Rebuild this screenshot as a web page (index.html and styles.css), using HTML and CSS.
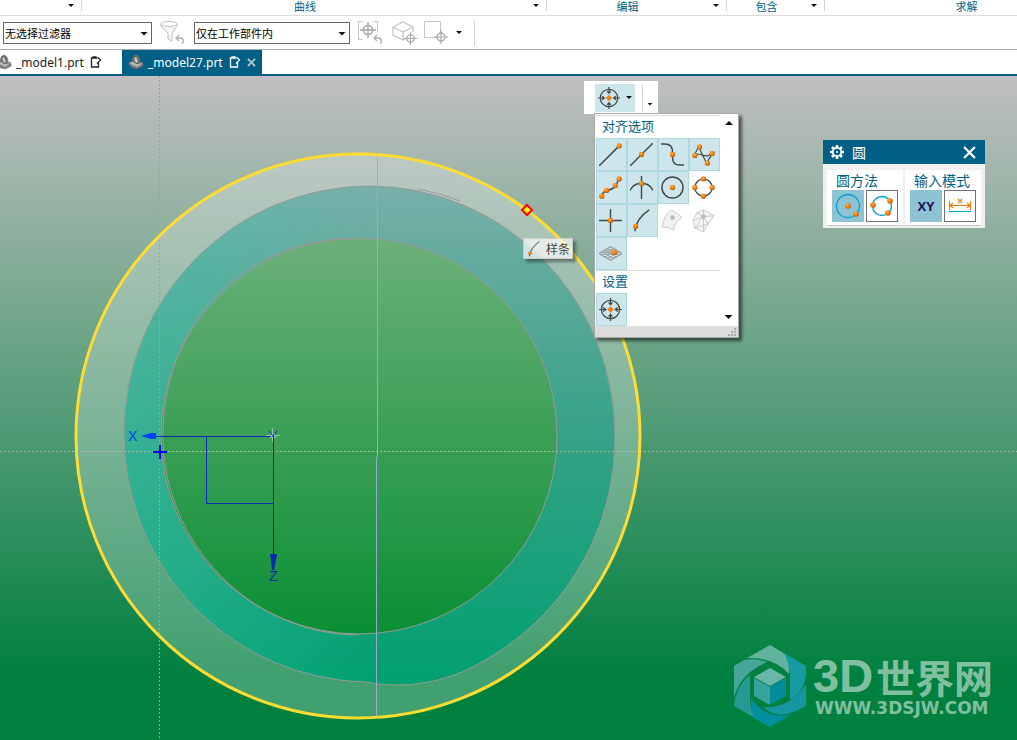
FILE: index.html
```html
<!DOCTYPE html>
<html lang="zh-CN">
<head>
<meta charset="utf-8">
<title>_model27.prt</title>
<link rel="stylesheet" href="styles.css">
</head>
<body>
<svg class="defs" aria-hidden="true">
  <defs>
    <radialGradient id="orange" cx=".4" cy=".35" r=".7"><stop offset="0" stop-color="#ffb347"/><stop offset=".5" stop-color="#f08010"/><stop offset="1" stop-color="#b85000"/></radialGradient>
    <symbol id="ball" viewBox="0 0 6 6"><circle cx="3" cy="3" r="2.8" fill="url(#orange)"/></symbol>
    <symbol id="snap" viewBox="0 0 24 24">
      <g fill="none" stroke="#404848" stroke-width="1.3"><circle cx="12" cy="12" r="9.5"/><path d="M12 0v7M12 24v-7M0 12h7M24 12h-7M10 4.500 12 7l2-2.500M10 19.500 12 17l2 2.500M4.500 10 7 12l-2.500 2M19.500 10 17 12l2.500 2"/></g>
      <path d="M12 8.500 15.500 12 12 15.500 8.500 12z" fill="#f08010"/>
    </symbol>
    <symbol id="spline" viewBox="0 0 24 24"><path d="M20 1C11 7 6 15 5 23" fill="none" stroke="#404848" stroke-width="1.500"/><use href="#ball" x="3" y="15" width="6" height="6"/></symbol>
    <symbol id="part" viewBox="0 0 16 16"><path d="M1 9 4 7Q5 1 8 1q4 1 4 7l3 1v3l-6 3-4-1-4-3z" fill="#7c7c7c" stroke="#666" stroke-width=".6"/><path d="M1 9l4-1 5 2 5-1-6 4z" fill="#b8b8b8"/><ellipse cx="8" cy="6" rx="2" ry="3.500" transform="rotate(-20 8 6)" fill="#c8c8c8" stroke="#555"/></symbol>
    <symbol id="note" viewBox="0 0 12 12"><path d="M7.500 2H1.500v9h7V7M3 2V1h3v1M8 1.500 10.500 4 7 7.500" fill="none" stroke="currentColor" stroke-width="1.300"/></symbol>
    <symbol id="undo" viewBox="0 0 10 10"><path d="M4 1 1 4l3 3M1 4h4c4 0 4 4 2 6" fill="none" stroke="#b0b0b0" stroke-width="1.300"/></symbol>
    <symbol id="target" viewBox="0 0 14 14"><path d="M7 0v14M0 7h14" stroke="#a8a8a8" stroke-width="1.200"/><circle cx="7" cy="7" r="4" fill="none" stroke="#a8a8a8" stroke-width="1.400"/></symbol>
  </defs>
</svg>

<header class="ribbon">
  <section class="group group-first"><button class="caret" aria-label="更多"></button></section>
  <section class="group group-curve"><span class="group-name">曲线</span><button class="caret" aria-label="曲线"></button></section>
  <section class="group group-edit"><span class="group-name">编辑</span><button class="caret" aria-label="编辑"></button></section>
  <section class="group group-include"><span class="group-name">包含</span><button class="caret" aria-label="包含"></button></section>
  <section class="group group-solve"><span class="group-name">求解</span></section>
</header>

<div class="selection-bar">
  <div class="pick pick-filter"><select aria-label="选择过滤器"><option>无选择过滤器</option></select></div>
  <button class="tool" aria-label="重置过滤器"><svg viewBox="0 0 26 26"><path d="M1 4v2l7 7v6l4 2v-8l5-7V4" fill="#f7f7f7" stroke="#c0c0c0"/><ellipse cx="9" cy="4" rx="8" ry="2.500" fill="#fff" stroke="#c0c0c0"/><use href="#undo" x="15" y="14" width="10" height="10"/></svg></button>
  <div class="pick pick-scope"><select aria-label="选择范围"><option>仅在工作部件内</option></select></div>
  <button class="tool" aria-label="重置选择"><svg viewBox="0 0 26 26"><path d="M4.500 1.500h-4v18h4M16 1.500h3.500v11" fill="none" stroke="#c6c6c6"/><use href="#target" x="2" y="2" width="16" height="16"/><use href="#undo" x="15" y="14" width="10" height="10"/></svg></button>
  <button class="tool tool-wide" aria-label="实体选择"><svg viewBox="0 0 26 26"><path d="M1 7 11 2l10 5v5M1 7v8l10 5 2-1M1 7l10 5 10-5M11 12v8" fill="none" stroke="#c4c4c4" stroke-width="1.300"/><use href="#target" x="12" y="12" width="13" height="13"/></svg></button>
  <button class="tool" aria-label="矩形选择"><svg viewBox="0 0 26 26"><path d="M12 17.500H.5v-16h16v10" fill="none" stroke="#c6c6c6"/><use href="#target" x="10" y="10" width="14" height="14"/></svg></button>
  <button class="caret caret-tool" aria-label="更多选择"></button>
  <span class="bar-line"></span>
</div>

<nav class="tabs">
  <a class="tab" href="#model1"><svg class="part"><use href="#part"/></svg>_model1.prt<svg class="note"><use href="#note"/></svg></a>
  <a class="tab tab-on" href="#model27"><svg class="part"><use href="#part"/></svg>_model27.prt<svg class="note"><use href="#note"/></svg><svg class="close" viewBox="0 0 10 10"><path d="m1 1 8 8M9 1 1 9" stroke="#b9c4c8" stroke-width="2"/></svg></a>
</nav>

<main class="stage">
  <svg class="model" role="img" aria-label="草图">
    <defs>
      <linearGradient id="core" x1="0" y1="0" x2="0" y2="1"><stop offset="0" stop-color="#6bb079"/><stop offset="1" stop-color="#0a8f34"/></linearGradient>
      <linearGradient id="ring" x1="0" y1="0" x2="0" y2="1"><stop offset="0" stop-color="#78afaa"/><stop offset=".5" stop-color="#35a286"/><stop offset="1" stop-color="#00a070"/></linearGradient>
      <linearGradient id="sheen"><stop offset="0" stop-color="#38c8a8" stop-opacity=".4"/><stop offset=".5" stop-color="#38c8a8" stop-opacity="0"/></linearGradient>
      <path id="band" d="M369 186A246 250 0 0 1 615 436C615 540 556 622 480 663C445 683 410 687 377 684C365 681 355 682 340 680C300 676 124 620 124 433A246 247 0 0 1 369 186Z"/>
    </defs>
    <g transform="translate(0 -76)">
      <circle cx="358" cy="436" r="282" fill="#fff" fill-opacity=".25"/>
      <path d="M369 186A246 250 0 0 1 615 436C615 540 556 622 480 663C445 683 410 687 377 684C365 681 355 682 340 680A246 248 0 0 1 124 433A246 247 0 0 1 369 186Z" fill="url(#ring)"/>
      <path d="M369 186A246 250 0 0 1 615 436C615 540 556 622 480 663C445 683 410 687 377 684C365 681 355 682 340 680A246 248 0 0 1 124 433A246 247 0 0 1 369 186Z" fill="url(#sheen)" stroke="#999"/>
      <circle cx="359" cy="436" r="198" fill="url(#core)" stroke="#999"/>
      <path d="M377 239C235 230 163 330 163 436C163 542 250 635 359 635" fill="none" stroke="#999"/>
      <path d="M418 189q22 4 42 12" fill="none" stroke="#999"/>
      <path d="M159.500 76V740" stroke="#80b878" stroke-dasharray="2 2"/>
      <path d="M0 451.500H4000" stroke="#b9b894" stroke-dasharray="2 2"/>
      <path d="M377.500 153V457" stroke="#9aabc9"/><path d="M376.500 457V718" stroke="#98aad0"/>
      <circle cx="358" cy="436" r="282" fill="none" stroke="#ffdc32" stroke-width="3"/>
      <g fill="none" stroke="#0028b4"><path d="M155 436.500H273.500M206.500 436V503.500H273M273.500 436V556"/></g>
      <path d="M141 436l10-3h5v6h-5z" fill="#0040ff"/>
      <path d="M270 554h7l-1 6-2 10h-2l-1-10z" fill="#0028b4"/>
      <g class="axis"><text x="128" y="441" fill="#0040f0">X</text><text x="269" y="581" fill="#0028b4">Z</text></g>
      <path d="M266 435.500h14M272.500 428v14" stroke="#dfeae0" stroke-opacity=".5"/>
      <path d="M270 433l6 5M275 433l-5 5" stroke="#e4eee4" stroke-opacity=".8"/>
      <path d="M269 431l4 5 4-5M273.500 436v5" fill="none" stroke="#0028b4"/>
      <path d="M153 452h14M160 445v14" stroke="#00f" stroke-width="2"/>
      <path d="M527 205l5 5-5 5-5-5z" fill="#ff0" stroke="#f00" stroke-width="2"/>
    </g>
  </svg>

  <div class="hint" role="tooltip"><svg><use href="#spline"/></svg>样条</div>

  <div class="snap-bar">
    <button class="snap-main" aria-label="对齐点"><svg><use href="#snap"/></svg><span class="caret"></span></button>
    <button class="snap-more" aria-label="工具条选项"><span class="caret"></span></button>
  </div>

  <section class="snap-menu">
    <div class="menu-body">
      <div class="menu-list">
        <h2>对齐选项</h2>
        <div class="cells">
          <button class="cell on" aria-label="端点"><svg viewBox="0 0 24 24"><path d="M0 24 21 3" stroke="#404848" stroke-width="1.500"/><use href="#ball" x="18" y="0" width="6" height="6"/></svg></button>
          <button class="cell on" aria-label="中点"><svg viewBox="0 0 24 24"><path d="M0 24 24 0" stroke="#404848" stroke-width="1.500"/><use href="#ball" x="9" y="9" width="6" height="6"/></svg></button>
          <button class="cell on" aria-label="拐点"><svg viewBox="0 0 24 24"><path d="M0 1h4c6 0 8 3 8 8v6c0 5 3 8 8 8h4" fill="none" stroke="#404848" stroke-width="1.500"/><use href="#ball" x="9" y="9" width="6" height="6"/></svg></button>
          <button class="cell on" aria-label="极点"><svg viewBox="0 0 24 24"><path d="M2 13 7 4l8 17 7-11M2 13C8 7 13 19 21 10" fill="none" stroke="#404848" stroke-width="1.200"/><use href="#ball" x="0" y="10" width="6" height="6"/><use href="#ball" x="5" y="1" width="6" height="6"/><use href="#ball" x="13" y="18" width="6" height="6"/><use href="#ball" x="18" y="8" width="6" height="6"/></svg></button>
          <button class="cell on" aria-label="定义点"><svg viewBox="0 0 24 24"><path d="M3 21c0-8 12-4 15-12l3-6" fill="none" stroke="#404848" stroke-width="1.500"/><use href="#ball" x="0" y="18" width="6" height="6"/><use href="#ball" x="5" y="12" width="6" height="6"/><use href="#ball" x="14" y="7" width="6" height="6"/><use href="#ball" x="18" y="0" width="6" height="6"/></svg></button>
          <button class="cell on" aria-label="交点"><svg viewBox="0 0 24 24"><path d="M12 0v24M0 15c5-10 19-10 24 0" fill="none" stroke="#404848" stroke-width="1.500"/><use href="#ball" x="9" y="5" width="6" height="6"/></svg></button>
          <button class="cell on" aria-label="圆心"><svg viewBox="0 0 24 24"><circle cx="12" cy="12" r="11" fill="none" stroke="#404848" stroke-width="1.500"/><use href="#ball" x="9" y="9" width="6" height="6"/></svg></button>
          <button class="cell" aria-label="象限点"><svg viewBox="0 0 24 24"><circle cx="12" cy="12" r="9" fill="none" stroke="#404848" stroke-width="1.500"/><use href="#ball" x="9" y="0" width="6" height="6"/><use href="#ball" x="9" y="18" width="6" height="6"/><use href="#ball" x="0" y="9" width="6" height="6"/><use href="#ball" x="18" y="9" width="6" height="6"/></svg></button>
          <button class="cell on" aria-label="现有点"><svg viewBox="0 0 24 24"><path d="M12 0v24M0 12h24" stroke="#404848" stroke-width="1.500"/><use href="#ball" x="9" y="9" width="6" height="6"/></svg></button>
          <button class="cell on" aria-label="曲线上的点"><svg viewBox="0 0 24 24"><use href="#spline"/></svg></button>
          <button class="cell" disabled aria-label="面上的点"><svg viewBox="0 0 24 24"><path d="M1 19Q3 6 11 1q6 3 11 8-7 3-9 13-5-4-12-3z" fill="#f1f1f1" stroke="#c8c8c8"/><circle cx="12" cy="9" r="2.500" fill="#bbb"/></svg></button>
          <button class="cell" disabled aria-label="小平面顶点"><svg viewBox="0 0 24 24"><path d="M1 12 5 4l7-3 11 6-6 8-5 9-9-4zM1 12l11-4L3 20M12 1v7l5 7-14 5M12 8l11-1M5 4l7 4v16" fill="#f4f4f4" stroke="#c8c8c8"/><circle cx="12" cy="8" r="2.500" fill="#bbb"/></svg></button>
          <button class="cell on" aria-label="有界栅格点"><svg viewBox="0 0 24 24"><path d="M0 12 12 5l12 7-12 7zM3 10l12 7M6 8.500l12 7M9 7l12 7M3 14l12-7M6 15.500l12-7M9 17l12-7" fill="none" stroke="#999" stroke-width="1.300"/><use href="#ball" x="13" y="8" width="6" height="6"/></svg></button>
        </div>
        <h2>设置</h2>
        <div class="cells cells-last"><button class="cell on" aria-label="启用捕捉点"><svg><use href="#snap"/></svg></button></div>
      </div>
      <div class="menu-scroll"><button class="caret up" aria-label="向上"></button><button class="caret" aria-label="向下"></button></div>
    </div>
    <div class="menu-foot"><svg viewBox="0 0 8 8"><path d="M6 0h2v2H6zM3 3h2v2H3zM6 3h2v2H6zM0 6h2v2H0zM3 6h2v2H3zM6 6h2v2H6z" fill="#aaa"/></svg></div>
  </section>

  <section class="dialog">
    <header class="dialog-head">
      <svg class="gear" viewBox="0 0 14 14"><path d="M7 0v14M0 7h14M2 2l10 10M12 2 2 12" stroke="#fff" stroke-width="2.500"/><circle cx="7" cy="7" r="4.200" fill="#005f87" stroke="#fff" stroke-width="1.800"/><circle cx="7" cy="7" r="1" fill="#fff"/></svg>
      <h1>圆</h1>
      <button class="dialog-close" aria-label="关闭"><svg viewBox="0 0 12 12"><path d="m1 1 10 10M11 1 1 11" stroke="#fff" stroke-width="2"/></svg></button>
    </header>
    <div class="dialog-body">
      <div class="panel"><h2>圆方法</h2><div class="choices">
        <button class="choice chosen" aria-label="圆心和直径定圆"><svg viewBox="0 0 28 28"><circle cx="14" cy="14" r="11.500" fill="none" stroke="#00a0d0" stroke-width="1.300"/><use href="#ball" x="11" y="11" width="6" height="6"/><use href="#ball" x="19" y="19" width="6" height="6"/></svg></button>
        <button class="choice" aria-label="三点定圆"><svg viewBox="0 0 28 28"><circle cx="14" cy="14" r="9.500" fill="none" stroke="#00a0d0" stroke-width="1.300"/><use href="#ball" x="2" y="10" width="6" height="6"/><use href="#ball" x="19" y="6" width="6" height="6"/><use href="#ball" x="17" y="18" width="6" height="6"/></svg></button>
      </div></div>
      <div class="panel"><h2>输入模式</h2><div class="choices">
        <button class="choice chosen xy">XY</button>
        <button class="choice" aria-label="参数模式"><svg viewBox="0 0 28 28"><path d="M3.500 9v9M24.500 9v9M4 13.500h20M7 11l-3 2.500L7 16M21 11l3 2.500-3 2.500M12 7l4 4M16 7l-4 4" fill="none" stroke="#f08010" stroke-width="1.200"/><path d="M3 19.500h22" stroke="#00a0d0"/></svg></button>
      </div></div>
    </div>
  </section>

  <div class="brand">
    <svg viewBox="0 0 72 82">
      <path d="M36 0 51 9q5 7 4 20Q40 12 13 13z" fill="#62b39d"/>
      <path d="M10 15q14-2 23 2Q4 30 0 54V21z" fill="#46a798"/>
      <path d="M0 61Q2 39 16 30q-1 19 13 34L20 73z" fill="#259894" opacity="0"/>
      <path d="M0 60Q3 39 16 30v24q0 10 5 19L0 61z" fill="#259a94"/>
      <path d="M17 53q16 23 41 16L36 82 20 73q-3-9-3-20z" fill="#0090a0"/>
      <path d="M29 62q27 2 43-23v22q-20 11-30 8-8-2-13-7z" fill="#1696a0"/>
      <path d="M50 8 72 21q2 23-16 34V27q-2-11-6-19z" fill="#149ca2"/>
      <path d="M36 23 52 32 36 41 20 32z" fill="#69b7aa"/><path d="M20 33 36 42v18L20 51z" fill="#38a39d"/><path d="M52 33v18l-16 9V42z" fill="#008d99"/>
    </svg>
    <div class="brand-text"><p class="brand-name">3D<span>世界网</span></p><p class="brand-url">WWW.3DSJW.COM</p></div>
  </div>
</main>
</body>
</html>
```

FILE: styles.css
```css
* { box-sizing: border-box; }
body {
  margin: 0;
  min-height: 100vh;
  display: flex;
  flex-direction: column;
  background: #fff;
  color: #111;
  font-family: "Noto Sans", "Noto Sans CJK SC", sans-serif;
  font-size: 12px;
  overflow: hidden;
}
h1, h2, p { margin: 0; font-weight: 400; }
button { padding: 0; border: 0; background: none; font: inherit; }
svg { display: block; }
.defs { position: absolute; width: 0; height: 0; }

.caret { flex: none; width: 6px; height: 3px; background: #111; clip-path: polygon(0 0, 100% 0, 50% 100%); }
.caret.up { transform: rotate(180deg); }

.ribbon { display: flex; height: 16px; border-bottom: 1px solid #dcdcdc; overflow: hidden; }
.group { display: flex; flex: none; height: 11px; align-items: center; justify-content: flex-end; padding-right: 7px; border-right: 1px solid #d4d4d4; }
.group-first { width: 82px; }
.group-curve { width: 465px; }
.group-edit { width: 180px; }
.group-include { width: 98px; }
.group-solve { width: 300px; }
.group-name { flex: 1; margin-right: 5px; text-align: center; color: #005f87; font: 11px/12px "Noto Sans CJK SC", sans-serif; }
.group-solve .group-name { margin-right: 9px; }

.selection-bar { display: flex; align-items: center; height: 34px; padding-left: 3px; border-bottom: 1px solid #a8a8a8; }
.pick { position: relative; height: 22px; }
.pick-filter { width: 149px; margin-right: 8px; }
.pick-scope { width: 156px; margin: 0 8px 0 8px; }
.pick select { width: 100%; height: 100%; padding: 0 1px; border: 1px solid #666; border-radius: 0; background: #fff; color: #000; appearance: none; font: 11px "Noto Sans CJK SC", sans-serif; }
.pick::after { content: ""; position: absolute; right: 4px; top: 10px; width: 8px; height: 4px; background: #111; clip-path: polygon(0 0, 100% 0, 50% 100%); }
.tool { width: 26px; height: 26px; }
.tool svg { width: 26px; height: 26px; }
.tool-wide { margin: 0 6px 0 8px; }
.caret-tool { margin-left: 6px; }
.bar-line { width: 1px; height: 26px; margin-left: 12px; background: #d4d4d4; }

.tabs { display: flex; height: 26px; border-bottom: 2px solid #005f87; }
.tab { display: flex; align-items: center; width: 126px; height: 24px; margin-left: -4px; gap: 4px; color: #222; text-decoration: none; font-size: 12px; }
.tab-on { width: 140px; height: 24px; margin: 0; padding-left: 6px; background: #005f87; color: #fff; }
.part { width: 16px; height: 16px; }
.note { width: 12px; height: 12px; margin-left: 2px; }
.close { width: 9px; height: 9px; margin-left: 2px; }

.stage { position: relative; flex: 1; overflow: hidden; background: linear-gradient(#c0c0c0, #00803f 600px); }
.model { position: absolute; inset: 0; width: 100%; height: 100%; }
.axis { font: 14px "Liberation Sans", sans-serif; }

.hint { position: absolute; left: 523px; top: 162px; display: flex; align-items: center; gap: 4px; height: 21px; padding: 0 2px; border: 1px solid #c8cdca; background: rgba(255, 255, 255, .68); box-shadow: 3px 3px 3px rgba(0, 0, 0, .4); color: #444; font: 12px "Noto Sans CJK SC", sans-serif; }
.hint svg { width: 16px; height: 16px; }

.snap-bar { position: absolute; left: 584px; top: 5px; display: flex; align-items: center; height: 33px; padding-left: 11px; background: #fff; }
.snap-main { display: flex; align-items: center; gap: 6px; width: 40px; height: 28px; padding-left: 3px; background: #cde6ec; }
.snap-main svg { width: 22px; height: 22px; }
.snap-more { display: flex; align-items: flex-end; width: 16px; height: 26px; margin-left: 7px; padding: 0 0 5px 4px; border-left: 1px solid #d4d4d4; }

.snap-menu { position: absolute; left: 594px; top: 37px; width: 145px; border: 1px solid #a8a8a8; background: #fff; box-shadow: 3px 3px 3px rgba(0, 0, 0, .55); }
.menu-body { display: flex; padding: 1px 1px 0; }
.menu-list { width: 124px; border-top: 1px solid #dcdcdc; }
.menu-list h2 { height: 22px; padding-left: 6px; color: #005f87; font: 13px/20px "Noto Sans CJK SC", sans-serif; }
.cells { display: grid; grid-template-columns: repeat(4, 31px); grid-auto-rows: 33px; border-bottom: 1px solid #dcdcdc; }
.cells-last { border: 0; }
.cell { display: grid; place-items: center; padding: 0 2px 1px 0; border: 1px solid transparent; }
.cell svg { width: 23px; height: 23px; }
.cell.on { border-color: #add8e2; background: #cde6ec; }
.menu-scroll { flex: 1; display: flex; flex-direction: column; justify-content: space-between; align-items: center; padding: 6px 0 7px; }
.menu-scroll .caret { width: 8px; height: 4px; }
.menu-foot { display: flex; justify-content: flex-end; align-items: center; height: 11px; padding-right: 2px; background: #dcdcdc; }
.menu-foot svg { width: 8px; height: 8px; }

.dialog { position: absolute; left: 823px; top: 64px; width: 162px; background: #f0f0f0; }
.dialog-head { display: flex; align-items: center; height: 24px; padding: 0 9px 0 7px; background: #005f87; color: #fff; }
.gear { width: 14px; height: 14px; margin-right: 8px; }
.dialog-head h1 { flex: 1; font: 14px/24px "Noto Sans CJK SC", sans-serif; }
.dialog-close svg { width: 13px; height: 13px; }
.dialog-body { display: flex; gap: 2px; padding: 6px 4px 2px; }
.panel { flex: 1; height: 56px; padding: 0 5px; border-bottom: 1px solid #c8c8c8; background: #fff; }
.panel h2 { height: 20px; padding-left: 4px; color: #005f87; font: 14px/20px "Noto Sans CJK SC", sans-serif; white-space: nowrap; }
.choices { display: flex; gap: 2px; }
.choice { flex: none; display: grid; place-items: center; width: 32px; height: 32px; border: 1px solid #707070; background: #fff; }
.choice svg { width: 28px; height: 28px; }
.chosen { border: 0; background: #8ec3d3; }
.xy { color: #201060; font: bold 13px "Open Sans", sans-serif; }

.brand { position: absolute; left: 734px; bottom: 13px; display: flex; gap: 7px; }
.brand svg { width: 72px; height: 82px; }
.brand-text { padding-top: 7px; color: rgba(255, 255, 255, .52); }
.brand-name { display: flex; align-items: center; gap: 3px; height: 48px; font: bold 47px/48px "Liberation Sans", sans-serif; }
.brand-name span { font: bold 39px/48px "Noto Sans CJK SC", sans-serif; }
.brand-url { padding-left: 2px; font: bold 17px/17px "DejaVu Sans", sans-serif; }
```
